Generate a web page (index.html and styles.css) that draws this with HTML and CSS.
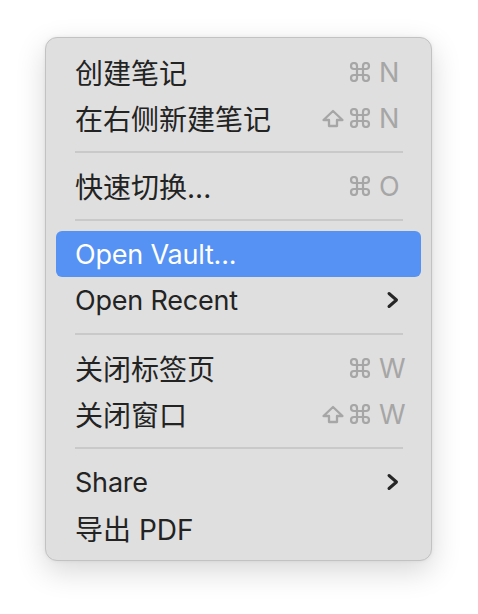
FILE: index.html
```html
<!DOCTYPE html>
<html lang="zh">
<head>
<meta charset="utf-8">
<link rel="stylesheet" href="styles.css">
</head>
<body>
<div class="menu">
  <div class="item"><span class="label cjk">创建笔记</span><span class="keys"><span class="mods"><svg class="cmd" viewBox="0 0 22 20"><path d="M8 7h6v6H8z M8 7V4a3 3 0 1 0-3 3h3 M14 7V4a3 3 0 1 1 3 3h-3 M8 13v3a3 3 0 1 1-3-3h3 M14 13v3a3 3 0 1 0 3-3h-3"/></svg></span><span class="key">N</span></span></div>
  <div class="item"><span class="label cjk">在右侧新建笔记</span><span class="keys"><span class="mods"><svg class="shift" viewBox="0 0 24 20"><path d="M12 3 2.5 12H8v6h8v-6h5.5z"/></svg><svg class="cmd" viewBox="0 0 22 20"><path d="M8 7h6v6H8z M8 7V4a3 3 0 1 0-3 3h3 M14 7V4a3 3 0 1 1 3 3h-3 M8 13v3a3 3 0 1 1-3-3h3 M14 13v3a3 3 0 1 0 3-3h-3"/></svg></span><span class="key">N</span></span></div>
  <div class="sep"></div>
  <div class="item"><span class="label cjk">快速切换...</span><span class="keys"><span class="mods"><svg class="cmd" viewBox="0 0 22 20"><path d="M8 7h6v6H8z M8 7V4a3 3 0 1 0-3 3h3 M14 7V4a3 3 0 1 1 3 3h-3 M8 13v3a3 3 0 1 1-3-3h3 M14 13v3a3 3 0 1 0 3-3h-3"/></svg></span><span class="key">O</span></span></div>
  <div class="sep"></div>
  <div class="item active"><span class="label">Open Vault...</span></div>
  <div class="item"><span class="label">Open Recent</span><svg class="chev" viewBox="0 0 14 18"><path d="M3 2.5l7.5 6.5L3 15.5"/></svg></div>
  <div class="sep"></div>
  <div class="item"><span class="label cjk">关闭标签页</span><span class="keys"><span class="mods"><svg class="cmd" viewBox="0 0 22 20"><path d="M8 7h6v6H8z M8 7V4a3 3 0 1 0-3 3h3 M14 7V4a3 3 0 1 1 3 3h-3 M8 13v3a3 3 0 1 1-3-3h3 M14 13v3a3 3 0 1 0 3-3h-3"/></svg></span><span class="key">W</span></span></div>
  <div class="item"><span class="label cjk">关闭窗口</span><span class="keys"><span class="mods"><svg class="shift" viewBox="0 0 24 20"><path d="M12 3 2.5 12H8v6h8v-6h5.5z"/></svg><svg class="cmd" viewBox="0 0 22 20"><path d="M8 7h6v6H8z M8 7V4a3 3 0 1 0-3 3h3 M14 7V4a3 3 0 1 1 3 3h-3 M8 13v3a3 3 0 1 1-3-3h3 M14 13v3a3 3 0 1 0 3-3h-3"/></svg></span><span class="key">W</span></span></div>
  <div class="sep"></div>
  <div class="item"><span class="label">Share</span><svg class="chev" viewBox="0 0 14 18"><path d="M3 2.5l7.5 6.5L3 15.5"/></svg></div>
  <div class="item"><span class="label cjk">导出 PDF</span></div>
</div>
</body>
</html>
```
FILE: styles.css
```css
html, body {
  margin: 0;
  padding: 0;
  background: #ffffff;
}
body {
  width: 478px;
  height: 614px;
  overflow: hidden;
  font-family: Inter, "Noto Sans CJK SC", sans-serif;
}
.menu {
  margin: 37px 0 0 45px;
  width: 385px;
  box-sizing: content-box;
  padding: 11px 0 9px;
  background: #dfdfdf;
  border: 1px solid #c2c2c2;
  border-radius: 12px;
  box-shadow: 0 10px 30px rgba(0, 0, 0, 0.16), 0 0 4px rgba(0, 0, 0, 0.06);
}
.item {
  height: 46px;
  margin: 0 10px;
  padding: 0 20px 0 19px;
  display: flex;
  align-items: center;
  justify-content: space-between;
  border-radius: 6px;
  color: #232323;
  font-size: 27px;
  letter-spacing: -0.2px;
}
.item.active {
  background: #5592f4;
  color: #ffffff;
}
.label {
  white-space: nowrap;
}
.label.cjk {
  font-size: 28px;
  letter-spacing: 0;
}
.keys {
  display: flex;
  align-items: center;
  color: #a6a6a6;
}
.mods {
  display: flex;
  align-items: center;
  gap: 4px;
}
.key {
  width: 22px;
  margin-left: 8px;
  text-align: left;
  font-size: 27px;
  line-height: 1;
}
.cmd {
  width: 22px;
  height: 20px;
  fill: none;
  stroke: #a6a6a6;
  stroke-width: 2.2;
}
.shift {
  width: 24px;
  height: 20px;
  fill: none;
  stroke: #a6a6a6;
  stroke-width: 2.3;
  stroke-linejoin: round;
}
.chev {
  width: 14px;
  height: 18px;
  margin-right: 1px;
  fill: none;
  stroke: #262626;
  stroke-width: 3;
  stroke-linecap: round;
  stroke-linejoin: round;
}
.sep {
  height: 2px;
  margin: 10px 28px 10px 29px;
  background: #c9c9c9;
}
```
